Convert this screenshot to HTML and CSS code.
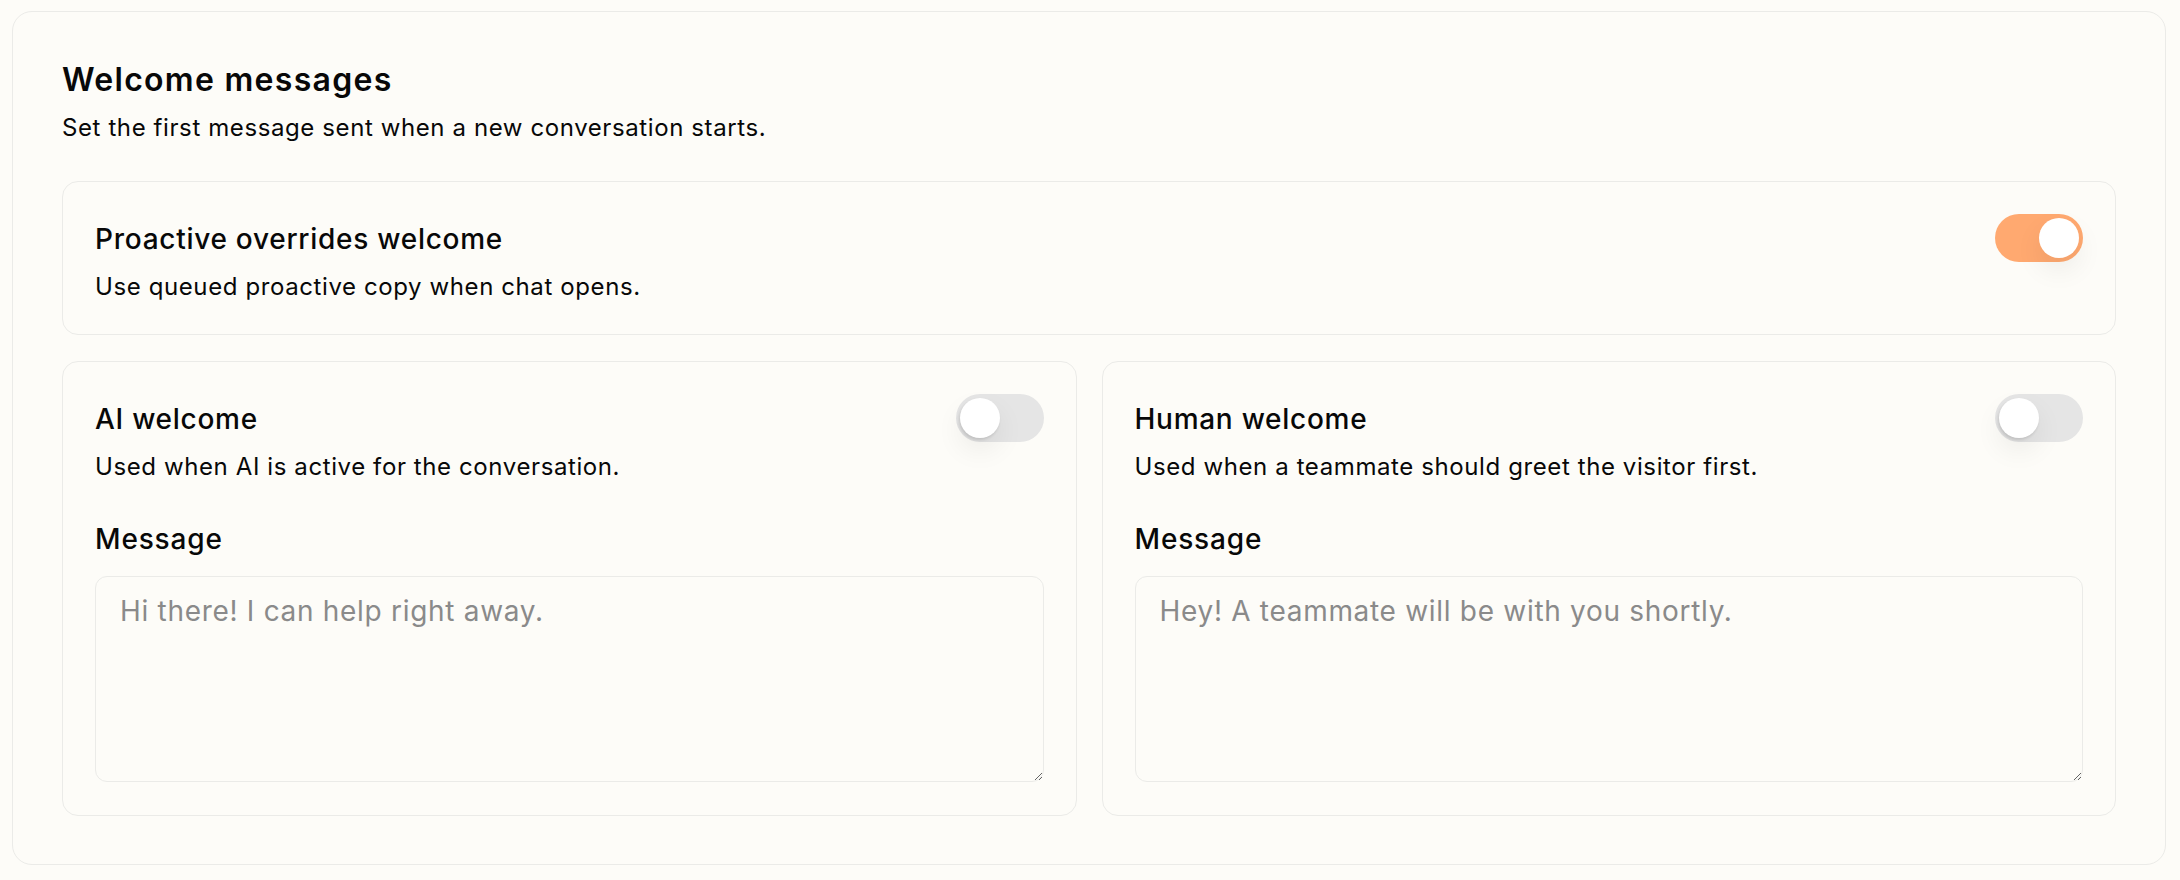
FILE: index.html
```html
<!DOCTYPE html>
<html lang="en">
<head>
    <meta charset="UTF-8">
    <meta name="viewport" content="width=device-width, initial-scale=1.0">
    <title>Welcome messages</title>
    <link rel="stylesheet" href="styles.css">
</head>
<body>
    <div class="panel">
        <h2 class="panel-title">Welcome messages</h2>
        <p class="panel-sub">Set the first message sent when a new conversation starts.</p>
        <div class="stack">
            <div class="card card-wide">
                <div class="card-head">
                    <div class="card-text">
                        <h3 class="card-title">Proactive overrides welcome</h3>
                        <p class="card-desc">Use queued proactive copy when chat opens.</p>
                    </div>
                    <button type="button" class="toggle on" role="switch" aria-checked="true"><span class="knob"></span></button>
                </div>
            </div>
            <div class="grid">
                <div class="card">
                    <div class="card-head">
                        <div class="card-text">
                            <h3 class="card-title">AI welcome</h3>
                            <p class="card-desc">Used when AI is active for the conversation.</p>
                        </div>
                        <button type="button" class="toggle" role="switch" aria-checked="false"><span class="knob"></span></button>
                    </div>
                    <label class="field-label" for="ai_message">Message</label>
                    <textarea class="field-input" id="ai_message" name="ai_message" placeholder="Hi there! I can help right away."></textarea>
                </div>
                <div class="card">
                    <div class="card-head">
                        <div class="card-text">
                            <h3 class="card-title">Human welcome</h3>
                            <p class="card-desc">Used when a teammate should greet the visitor first.</p>
                        </div>
                        <button type="button" class="toggle" role="switch" aria-checked="false"><span class="knob"></span></button>
                    </div>
                    <label class="field-label" for="human_message">Message</label>
                    <textarea class="field-input" id="human_message" name="human_message" placeholder="Hey! A teammate will be with you shortly."></textarea>
                </div>
            </div>
        </div>
    </div>
</body>
</html>
```

FILE: styles.css
```css
* {
    box-sizing: border-box;
}
body {
    margin: 0;
    padding: 11px 14px 11px 12px;
    background-color: #fdfcf8;
    font-family: Inter, "Noto Sans", sans-serif;
    color: #080808;
}
.panel {
    padding: 48px 49px;
    border: 1px solid #ebebe8;
    border-radius: 20px;
    background-color: #fdfcf8;
}
.panel-title {
    margin: 0;
    font-size: 32px;
    line-height: 40px;
    font-weight: 600;
    letter-spacing: 0.04em;
}
.panel-sub {
    margin: 12px 0 0;
    font-size: 24px;
    line-height: 32px;
    letter-spacing: 0.025em;
}
.stack {
    display: flex;
    flex-direction: column;
    gap: 26px;
    margin-top: 37px;
}
.grid {
    display: grid;
    grid-template-columns: 1fr 1fr;
    gap: 25px;
}
.card {
    padding: 32px 32px 33px;
    border: 1px solid #ebebe8;
    border-radius: 16px;
}
.card-wide {
    padding-bottom: 32px;
}
.card-head {
    display: flex;
    justify-content: space-between;
    align-items: flex-start;
    gap: 24px;
}
.card-title {
    margin: 7px 0 0;
    font-size: 28px;
    line-height: 36px;
    font-weight: 500;
    letter-spacing: 0.026em;
}
.card-desc {
    margin: 15px 0 0;
    font-size: 24px;
    line-height: 30px;
    letter-spacing: 0.025em;
}
.field-label {
    display: block;
    margin-top: 39px;
    font-size: 28px;
    line-height: 36px;
    font-weight: 500;
    letter-spacing: 0.03em;
}
.field-input {
    display: block;
    width: 100%;
    height: 206px;
    margin-top: 19px;
    padding: 16px 24px;
    border: 1px solid #ebebe8;
    border-radius: 12px;
    background-color: transparent;
    font-family: inherit;
    font-size: 28px;
    line-height: 36px;
    letter-spacing: 0.025em;
    color: #111;
    resize: vertical;
}
.field-input::placeholder {
    color: #8a8a8a;
}
.toggle {
    flex: none;
    display: flex;
    width: 88px;
    height: 48px;
    padding: 4px;
    border: none;
    border-radius: 24px;
    background-color: #e5e5e5;
    cursor: pointer;
}
.toggle.on {
    justify-content: flex-end;
    background-color: #ffa970;
}
.knob {
    width: 40px;
    height: 40px;
    border-radius: 50%;
    background-color: #fff;
    box-shadow: -1px 2px 3px rgba(0, 0, 0, 0.12), 0 12px 28px rgba(0, 0, 0, 0.07);
}
.toggle.on .knob {
    box-shadow: 0 12px 28px rgba(0, 0, 0, 0.07);
}
```
